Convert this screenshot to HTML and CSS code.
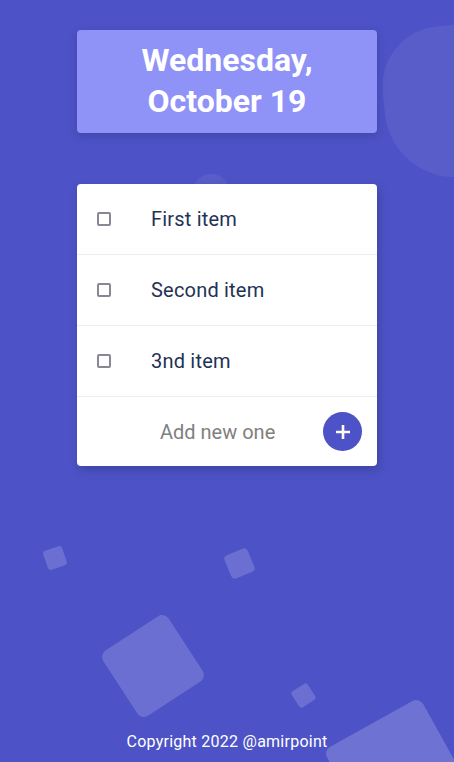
FILE: index.html
```html
<!DOCTYPE html>
<html lang="en">
<head>
<meta charset="utf-8">
<title>Todo</title>
<link rel="stylesheet" href="styles.css">
</head>
<body>
<div class="bg">
  <span class="shape blob"></span>
  <span class="shape dot"></span>
  <span class="shape sq sq1"></span>
  <span class="shape sq sq2"></span>
  <span class="shape sq sq3"></span>
  <span class="shape sq sq4"></span>
  <span class="shape sq sq5"></span>
</div>
<main class="app">
  <h1 class="date">Wednesday,<br>October 19</h1>
  <section class="card">
    <label class="row"><span class="check"></span><span class="label">First item</span></label>
    <label class="row"><span class="check"></span><span class="label">Second item</span></label>
    <label class="row"><span class="check"></span><span class="label">3nd item</span></label>
    <div class="add">
      <input class="add-input" type="text" placeholder="Add new one">
      <button class="add-btn" type="button" aria-label="Add">
        <svg width="16" height="16" viewBox="0 0 16 16"><path d="M8 1v14M1 8h14" stroke="#fff" stroke-width="2.6" fill="none"/></svg>
      </button>
    </div>
  </section>
  <footer class="footer">Copyright 2022 @amirpoint</footer>
</main>
</body>
</html>
```
FILE: styles.css
```css
* { box-sizing: border-box; }
html, body { margin: 0; padding: 0; }
body {
  background: #4d53c6;
  font-family: Roboto, "Open Sans", sans-serif;
  min-height: 100vh;
  overflow: hidden;
  position: relative;
}
.bg { position: absolute; inset: 0; overflow: hidden; z-index: 0; }
.shape { position: absolute; display: block; }
.blob {
  left: 384px; top: 24px; width: 160px; height: 152px;
  background: #585dca;
  border-radius: 60px 40px 50px 70px;
  transform: rotate(-6deg);
}
.dot {
  left: 192px; top: 174px; width: 38px; height: 38px;
  border-radius: 50%;
  background: #585dca;
}
.sq { background: #6a6fd1; border-radius: 5px; }
.sq1 { left: 44.5px; top: 547.5px; width: 20px; height: 20px; transform: rotate(-19deg); border-radius: 3px; }
.sq2 { left: 226.5px; top: 550.5px; width: 25px; height: 25px; transform: rotate(-23deg); border-radius: 4px; }
.sq3 { left: 113.5px; top: 626.5px; width: 78px; height: 78px; transform: rotate(-33deg); border-radius: 8px; }
.sq4 { left: 294px; top: 686px; width: 19px; height: 19px; transform: rotate(-33deg); border-radius: 3px; }
.sq5 { left: 342.75px; top: 716.75px; width: 110px; height: 110px; transform: rotate(-29deg); border-radius: 8px; background: #6e73d3; }

.app {
  position: relative;
  z-index: 1;
  width: 300px;
  margin: 0 auto;
  min-height: 100vh;
  display: flex;
  flex-direction: column;
  padding-top: 30px;
}
.date {
  margin: 0;
  height: 103px;
  padding-top: 10px;
  background: #8f92f7;
  border-radius: 4px;
  color: #fff;
  text-align: center;
  font-size: 32px;
  line-height: 41px;
  font-weight: 700;
  box-shadow: 0 3px 8px rgba(30, 30, 90, 0.25);
}
.card {
  margin-top: 51px;
  background: #fff;
  border-radius: 4px;
  box-shadow: 2px 4px 10px rgba(30, 30, 90, 0.3);
  display: flex;
  flex-direction: column;
}
.row {
  height: 71px;
  border-bottom: 1px solid #ececf0;
  display: flex;
  align-items: center;
  padding-left: 20px;
}
.check {
  width: 14px; height: 14px;
  border: 2px solid #8a8795;
  border-radius: 2px;
  flex: none;
}
.label {
  margin-left: 40px;
  font-size: 20px;
  letter-spacing: 0.2px;
  color: #1f3256;
}
.add {
  height: 69px;
  display: flex;
  align-items: center;
  padding-right: 15px;
}
.add-input {
  flex: 1;
  min-width: 0;
  border: 0;
  outline: none;
  background: transparent;
  font: inherit;
  font-size: 20px;
  padding: 0 0 0 83px;
  color: #333;
}
.add-input::placeholder { color: #808080; opacity: 1; }
.add-btn {
  width: 39px; height: 39px;
  border-radius: 50%;
  border: 0;
  background: #4d53c6;
  display: flex;
  align-items: center;
  justify-content: center;
  padding: 0;
  flex: none;
}
.add-btn svg { display: block; }
.footer {
  margin-top: auto;
  text-align: center;
  color: #fff;
  font-size: 16px;
  letter-spacing: 0.25px;
  line-height: 24px;
  padding-bottom: 8px;
}
```
